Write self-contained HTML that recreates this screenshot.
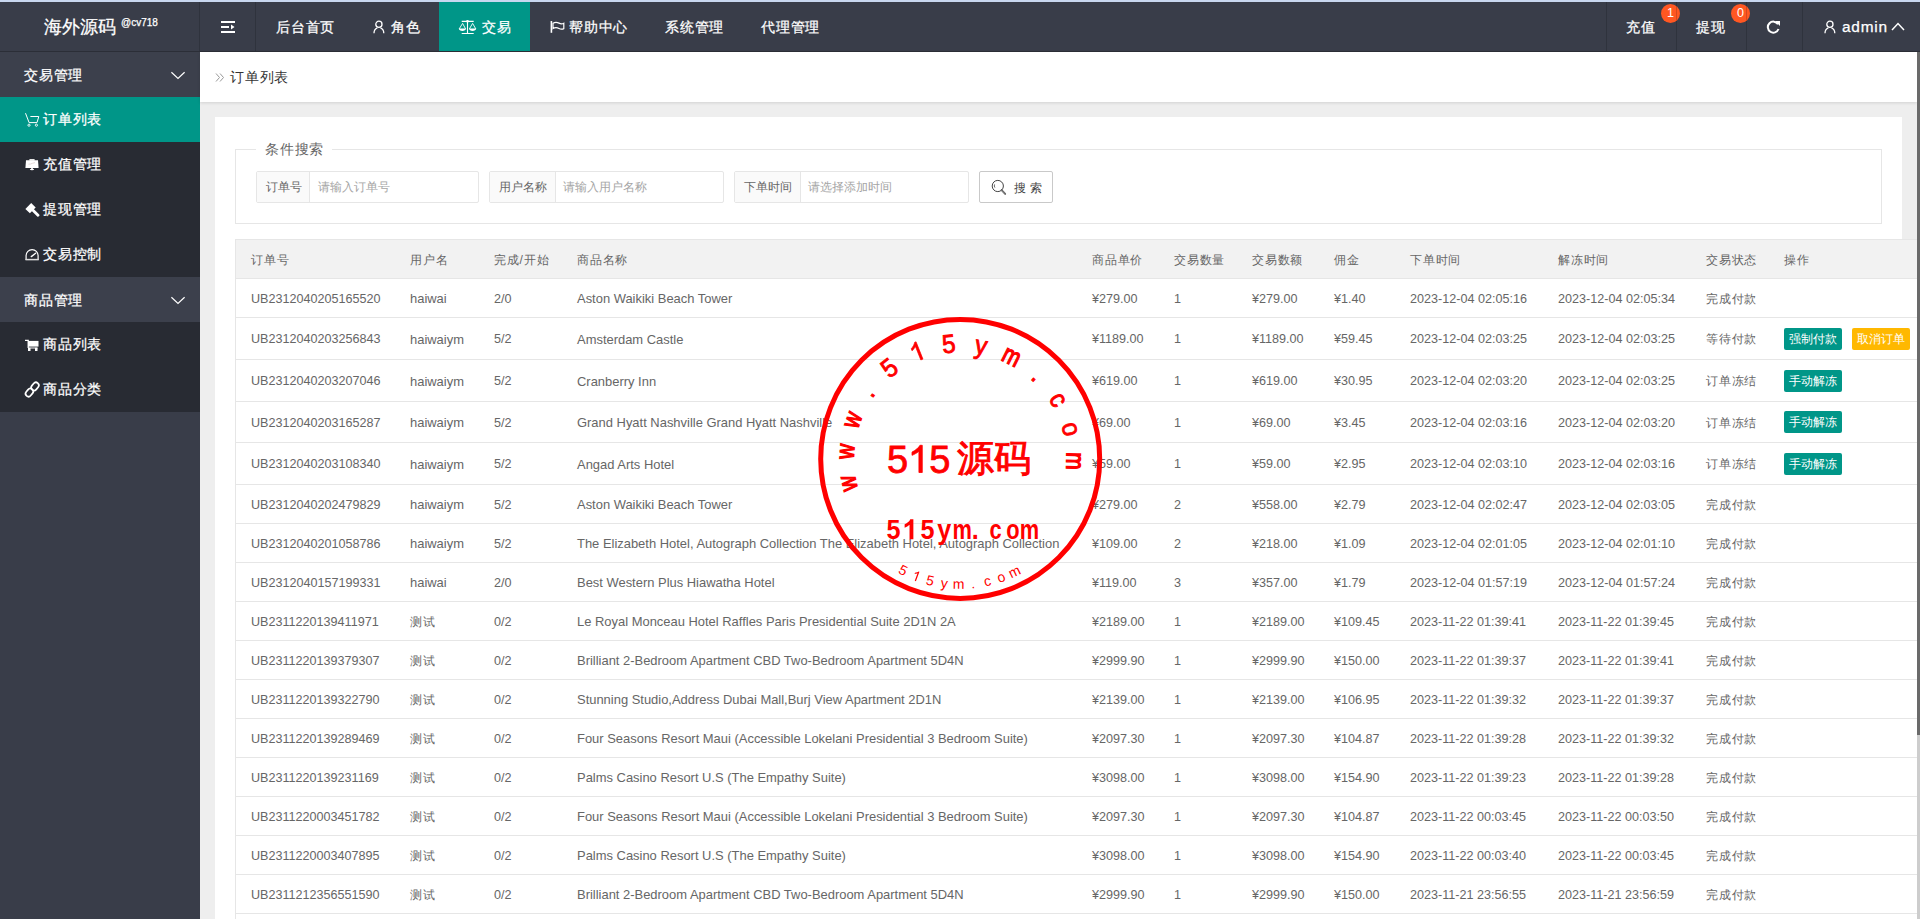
<!DOCTYPE html>
<html><head><meta charset="utf-8">
<style>
*{margin:0;padding:0;box-sizing:border-box}
html,body{width:1920px;height:919px;overflow:hidden;background:#eeeeee;font-family:"Liberation Sans",sans-serif;}
.abs{position:absolute}
#topline{position:absolute;left:0;top:0;width:1920px;height:2px;background:#c8d7ef}
#header{position:absolute;left:0;top:2px;width:1920px;height:50px;background:#393d49;border-bottom:1px solid #2b2e37}
.hsep{position:absolute;top:2px;width:1px;height:49px;background:rgba(0,0,0,0.16)}
.hnav{position:absolute;top:3px;height:49px;line-height:49px;color:#fff;font-size:14px;letter-spacing:0.8px;white-space:nowrap}
.logo{position:absolute;left:44px;top:-2px;height:49px;line-height:49px;color:#fff;font-size:18px}
.logo sup{font-size:10px;position:relative;top:0px;margin-left:5px}
#side{position:absolute;left:0;top:52px;width:200px;height:867px;background:#393d49}
.sp{position:absolute;left:0;width:200px;height:45px;line-height:47px;color:#fff;font-size:14px;letter-spacing:0.8px;padding-left:24px;background:#3c404c}
.sc{position:absolute;left:0;width:200px;height:45px;line-height:45px;color:#fff;font-size:14px;letter-spacing:0.8px;padding-left:43px;background:#282b33}
.sc.on{background:#009688}
.sico{position:absolute;left:25px;top:15px;width:15px;height:15px}
.chev{position:absolute;left:171px;top:19px}
#crumb{position:absolute;left:200px;top:52px;width:1717px;height:50px;background:#fff;box-shadow:0 1px 3px rgba(0,0,0,.12)}
#crumb .t{position:absolute;left:30px;top:0;line-height:50px;font-size:14px;letter-spacing:0.8px;color:#333}
#card{position:absolute;left:215px;top:117px;width:1687px;height:802px;background:#fff}
#fs{position:absolute;left:235px;top:149px;width:1647px;height:75px;border:1px solid #e6e6e6}
#legend{position:absolute;left:256px;top:140px;width:76px;height:20px;background:#fff;font-size:14px;letter-spacing:0.8px;color:#666;line-height:18px;padding-left:9px}
.ig{position:absolute;top:171px;height:32px;border:1px solid #e6e6e6;border-radius:2px;background:#fff}
.ig .lb{position:absolute;left:0;top:0;height:30px;line-height:31px;background:#fafafa;border-right:1px solid #e6e6e6;font-size:12px;color:#666;padding-left:9px}
.ig .ph{position:absolute;top:0;height:30px;line-height:31px;font-size:12px;color:#a5a5a5}
#sbtn{position:absolute;left:979px;top:171px;width:74px;height:32px;border:1px solid #c9c9c9;border-radius:2px;background:#fff;font-size:13px;color:#333;line-height:30px}
.thead{position:absolute;left:235px;width:1682px;background:#f2f2f2;border-top:1px solid #e6e6e6;border-left:1px solid #e6e6e6}
.th,.td{position:absolute;font-size:12.6px;color:#666;white-space:nowrap}
.td{padding-top:1px}
.th{padding-top:2px;font-size:12px;letter-spacing:0.8px}
.tline{position:absolute;left:236px;width:1681px;height:1px;background:#e6e6e6}
#tleft{position:absolute;left:235px;top:239px;width:1px;height:680px;background:#e6e6e6}
#tbg{position:absolute;left:236px;top:279px;width:1681px;height:640px;background:#fff}
.btn{position:absolute;height:22px;line-height:22px;width:58px;text-align:center;background:#009688;color:#fff;font-size:12px;border-radius:2px;white-space:nowrap}
.btn.warm{background:#ffb800}
.hnav,.sp,.sc,.logo{-webkit-text-stroke:0.25px #fff}
#scroll{position:absolute;left:1917px;top:52px;width:3px;height:867px;background:linear-gradient(#6a6a6a 0,#6a6a6a 683px,#cdcdcd 683px)}
.badge{position:absolute;top:3.5px;width:19px;height:19px;border-radius:50%;background:#ff5722;color:#fff;font-size:12.5px;line-height:19px;text-align:center}
</style></head><body>
<div id="topline"></div>
<div id="header"></div>
<div class="hsep" style="left:199px"></div>
<div class="hsep" style="left:255px"></div>
<div class="logo">海外源码<sup>@cv718</sup></div>
<svg class="abs" style="left:221px;top:21px" width="15" height="12" viewBox="0 0 15 12"><rect x="0" y="0" width="14" height="2" fill="#fff"/><rect x="0" y="5" width="8" height="2" fill="#fff"/><path d="M10 3.5 L13.5 6 L10 8.5Z" fill="#fff"/><rect x="0" y="10" width="14" height="2" fill="#fff"/></svg>
<div class="hnav" style="left:276px">后台首页</div>
<svg class="abs" style="left:372px;top:20px" width="14" height="14" viewBox="0 0 14 14"><circle cx="6.9" cy="4.3" r="3.1" fill="none" stroke="#fff" stroke-width="1.3"/><path d="M2 13.2 C2 10.6 3.4 8.7 5.3 7.9 M11.8 13.2 C11.8 10.6 10.4 8.7 8.5 7.9" fill="none" stroke="#fff" stroke-width="1.3"/></svg>
<div class="hnav" style="left:391px">角色</div>
<div class="abs" style="left:439px;top:2px;width:91px;height:49px;background:#009688"></div>
<svg class="abs" style="left:458px;top:19px" width="19" height="16" viewBox="0 0 19 16"><path d="M3.7 2.4H15.7M9.5 2.4V14.5M3.7 14.5H15.7" stroke="#fff" stroke-width="1.1" fill="none"/><circle cx="9.5" cy="2.3" r="1.3" fill="#fff"/><path d="M1.2 9.9 L4.6 4.4 L7.6 9.9 M11.4 9.9 L14.6 4.4 L17.8 9.9" stroke="#fff" stroke-width="0.9" fill="none"/><path d="M0.8 9.6 H8 C8 12.8 0.8 12.8 0.8 9.6Z M11 9.6 H18.2 C18.2 12.8 11 12.8 11 9.6Z" fill="#fff"/></svg>
<div class="hnav" style="left:482px">交易</div>
<svg class="abs" style="left:549px;top:19px" width="17" height="16" viewBox="0 0 17 16"><path d="M2.4 2V13.8" stroke="#fff" stroke-width="1.6"/><path d="M4 4.3 C6 2.9 8 3 10 4.1 C11.8 5.1 13.3 5 14.8 4.2 V9.6 C13.3 10.4 11.8 10.5 10 9.5 C8 8.4 6 8.3 4 9.6Z" stroke="#fff" stroke-width="1.2" fill="none"/></svg>
<div class="hnav" style="left:569px">帮助中心</div>
<div class="hnav" style="left:665px">系统管理</div>
<div class="hnav" style="left:761px">代理管理</div>
<div class="hnav" style="left:1626px">充值</div>
<div class="badge" style="left:1661px">1</div>
<div class="hnav" style="left:1696px">提现</div>
<div class="badge" style="left:1731px">0</div>
<div class="hsep" style="left:1606px"></div>
<div class="hsep" style="left:1676px"></div>
<div class="hsep" style="left:1746px"></div>
<div class="hsep" style="left:1802px"></div>
<svg class="abs" style="left:1766px;top:20px" width="15" height="14" viewBox="0 0 15 14"><path d="M12 4.2 A5.5 5.5 0 1 0 12.5 9" stroke="#fff" stroke-width="2" fill="none"/><path d="M9 1 L14 1 L14 6Z" fill="#fff"/></svg>
<svg class="abs" style="left:1823px;top:20px" width="14" height="14" viewBox="0 0 14 14"><circle cx="6.9" cy="4.3" r="3.1" fill="none" stroke="#fff" stroke-width="1.3"/><path d="M2 13.2 C2 10.6 3.4 8.7 5.3 7.9 M11.8 13.2 C11.8 10.6 10.4 8.7 8.5 7.9" fill="none" stroke="#fff" stroke-width="1.3"/></svg>
<div class="hnav" style="left:1842px;top:2px;font-size:15.4px">admin</div>
<svg class="abs" style="left:1891px;top:22px" width="14" height="9" viewBox="0 0 14 9"><path d="M1 8 L7 1.5 L13 8" stroke="#fff" stroke-width="1.5" fill="none"/></svg>

<div id="side">
  <div class="sp" style="top:0">交易管理<svg class="chev" width="15" height="9" viewBox="0 0 15 9"><path d="M0.4 1.3 L7 7.4 L13.6 1.3" stroke="#fff" stroke-width="1.2" fill="none"/></svg></div>
  <div class="sc on" style="top:45px"><svg class="sico" viewBox="0 0 15 15"><path d="M0.5 1.2 L4.1 10.6 H12 L13.8 4.5 H5.4" stroke="#fff" stroke-width="1" fill="none"/><circle cx="4" cy="13.2" r="1.1" stroke="#fff" stroke-width="0.9" fill="none"/><circle cx="11.4" cy="13.2" r="1.1" stroke="#fff" stroke-width="0.9" fill="none"/></svg>订单列表</div>
  <div class="sc" style="top:90px"><svg class="sico" viewBox="0 0 15 15"><rect x="4.4" y="2" width="5.2" height="1.8" fill="#e6e6e6"/><path d="M1 3.3 H13 L13.6 10.9 H0.4Z" fill="#fff"/><rect x="6.2" y="10.8" width="1.6" height="1.2" fill="#fff"/><ellipse cx="7" cy="12.5" rx="2.2" ry="0.8" fill="#fff"/><path d="M3.5 7.2 L5.5 7 L7.5 6.3 L10 5.6" stroke="#d9c9c9" stroke-width="0.7" fill="none"/></svg>充值管理</div>
  <div class="sc" style="top:135px"><svg class="sico" viewBox="0 0 15 15"><path d="M6.2 0.9 L10.7 5.4 L4.9 11.2 L0.4 6.9Z" fill="#fff"/><path d="M8 8.2 L13 13.3" stroke="#fff" stroke-width="2.8" stroke-linecap="round"/></svg>提现管理</div>
  <div class="sc" style="top:180px"><svg class="sico" viewBox="0 0 15 15"><path d="M1.1 13 V8.6 A6 6 0 0 1 13.1 8.6 V13" stroke="#fff" stroke-width="1.2" fill="none"/><path d="M0.5 12.6 H13.7" stroke="#dcdcdc" stroke-width="1.5"/><path d="M6.3 9.6 L10.6 6.2" stroke="#fff" stroke-width="1.4" stroke-linecap="round"/></svg>交易控制</div>
  <div class="sp" style="top:225px">商品管理<svg class="chev" width="15" height="9" viewBox="0 0 15 9"><path d="M0.4 1.3 L7 7.4 L13.6 1.3" stroke="#fff" stroke-width="1.2" fill="none"/></svg></div>
  <div class="sc" style="top:270px"><svg class="sico" viewBox="0 0 15 15"><path d="M0 3.4 H3.2 V11" stroke="#fff" stroke-width="1.3" fill="none"/><rect x="3" y="3.9" width="10.5" height="5.7" fill="#fff"/><rect x="3.2" y="10.5" width="9.3" height="1" fill="#fff"/><rect x="3" y="10.8" width="2.5" height="3.2" fill="#fff"/><rect x="10" y="10.8" width="2.5" height="3.2" fill="#fff"/></svg>商品列表</div>
  <div class="sc" style="top:315px"><svg class="sico" viewBox="0 0 15 15" style="overflow:visible"><g stroke="#fff" stroke-width="1.7" fill="none"><rect x="-4.3" y="-2.9" width="8.6" height="5.8" rx="2.9" transform="translate(10 4.4) rotate(-50)"/><rect x="-4.3" y="-2.9" width="8.6" height="5.8" rx="2.9" transform="translate(4.4 10.6) rotate(-50)"/></g></svg>商品分类</div>
</div>

<div id="crumb"><svg class="abs" style="left:15px;top:21px" width="10" height="9" viewBox="0 0 10 9"><path d="M1 0.5 L4.5 4.5 L1 8.5 M5 0.5 L8.5 4.5 L5 8.5" stroke="#999" stroke-width="1" fill="none"/></svg><div class="t">订单列表</div></div>

<div id="card"></div>
<div id="fs"></div>
<div id="legend">条件搜索</div>
<div class="ig" style="left:256px;width:223px"><div class="lb" style="width:53px">订单号</div><div class="ph" style="left:61px">请输入订单号</div></div>
<div class="ig" style="left:489px;width:235px"><div class="lb" style="width:66px">用户名称</div><div class="ph" style="left:73px">请输入用户名称</div></div>
<div class="ig" style="left:734px;width:235px"><div class="lb" style="width:66px">下单时间</div><div class="ph" style="left:73px">请选择添加时间</div></div>
<div id="sbtn"><svg class="abs" style="left:11px;top:7px" width="17" height="17" viewBox="0 0 17 17"><circle cx="6.8" cy="7" r="5.6" stroke="#444" stroke-width="1" fill="none"/><path d="M10.6 11.2 L14.2 14.8" stroke="#444" stroke-width="1.8" stroke-linecap="round"/><path d="M10.6 11.2 L14.2 14.8" stroke="#fff" stroke-width="0.5"/><path d="M3.6 5.4 A3.3 3.3 0 0 0 3.9 8.6" stroke="#444" stroke-width="0.8" fill="none"/></svg><span class="abs" style="left:34px;top:1px;letter-spacing:4px;font-size:12px;color:#444">搜索</span></div>

<div class="thead" style="top:239px;height:40px"></div>
<div id="tbg"></div>
<div id="tleft"></div>
<div class="thead" style="top:239px;height:39px"></div>
<div class="th" style="left:251px;top:239px;height:39px;line-height:39px">订单号</div>
<div class="th" style="left:410px;top:239px;height:39px;line-height:39px">用户名</div>
<div class="th" style="left:494px;top:239px;height:39px;line-height:39px">完成/开始</div>
<div class="th" style="left:577px;top:239px;height:39px;line-height:39px">商品名称</div>
<div class="th" style="left:1092px;top:239px;height:39px;line-height:39px">商品单价</div>
<div class="th" style="left:1174px;top:239px;height:39px;line-height:39px">交易数量</div>
<div class="th" style="left:1252px;top:239px;height:39px;line-height:39px">交易数额</div>
<div class="th" style="left:1334px;top:239px;height:39px;line-height:39px">佣金</div>
<div class="th" style="left:1410px;top:239px;height:39px;line-height:39px">下单时间</div>
<div class="th" style="left:1558px;top:239px;height:39px;line-height:39px">解冻时间</div>
<div class="th" style="left:1706px;top:239px;height:39px;line-height:39px">交易状态</div>
<div class="th" style="left:1784px;top:239px;height:39px;line-height:39px">操作</div>
<div class="tline" style="top:278px"></div>
<div class="tline" style="top:317px"></div>
<div class="td" style="left:251px;top:279px;height:38px;line-height:38px">UB2312040205165520</div>
<div class="td" style="left:410px;top:279px;height:38px;line-height:38px;font-size:12.95px">haiwai</div>
<div class="td" style="left:494px;top:279px;height:38px;line-height:38px">2/0</div>
<div class="td" style="left:577px;top:279px;height:38px;line-height:38px;font-size:12.95px">Aston Waikiki Beach Tower</div>
<div class="td" style="left:1092px;top:279px;height:38px;line-height:38px">¥279.00</div>
<div class="td" style="left:1174px;top:279px;height:38px;line-height:38px">1</div>
<div class="td" style="left:1252px;top:279px;height:38px;line-height:38px">¥279.00</div>
<div class="td" style="left:1334px;top:279px;height:38px;line-height:38px">¥1.40</div>
<div class="td" style="left:1410px;top:279px;height:38px;line-height:38px">2023-12-04 02:05:16</div>
<div class="td" style="left:1558px;top:279px;height:38px;line-height:38px">2023-12-04 02:05:34</div>
<div class="td" style="left:1706px;top:279px;height:38px;line-height:38px;font-size:12px;letter-spacing:0.8px">完成付款</div>
<div class="tline" style="top:359px"></div>
<div class="td" style="left:251px;top:318px;height:41px;line-height:41px">UB2312040203256843</div>
<div class="td" style="left:410px;top:318px;height:41px;line-height:41px;font-size:12.95px">haiwaiym</div>
<div class="td" style="left:494px;top:318px;height:41px;line-height:41px">5/2</div>
<div class="td" style="left:577px;top:318px;height:41px;line-height:41px;font-size:12.95px">Amsterdam Castle</div>
<div class="td" style="left:1092px;top:318px;height:41px;line-height:41px">¥1189.00</div>
<div class="td" style="left:1174px;top:318px;height:41px;line-height:41px">1</div>
<div class="td" style="left:1252px;top:318px;height:41px;line-height:41px">¥1189.00</div>
<div class="td" style="left:1334px;top:318px;height:41px;line-height:41px">¥59.45</div>
<div class="td" style="left:1410px;top:318px;height:41px;line-height:41px">2023-12-04 02:03:25</div>
<div class="td" style="left:1558px;top:318px;height:41px;line-height:41px">2023-12-04 02:03:25</div>
<div class="td" style="left:1706px;top:318px;height:41px;line-height:41px;font-size:12px;letter-spacing:0.8px">等待付款</div>
<div class="btn" style="left:1784px;top:328px">强制付款</div>
<div class="btn warm" style="left:1852px;top:328px">取消订单</div>
<div class="tline" style="top:401px"></div>
<div class="td" style="left:251px;top:360px;height:41px;line-height:41px">UB2312040203207046</div>
<div class="td" style="left:410px;top:360px;height:41px;line-height:41px;font-size:12.95px">haiwaiym</div>
<div class="td" style="left:494px;top:360px;height:41px;line-height:41px">5/2</div>
<div class="td" style="left:577px;top:360px;height:41px;line-height:41px;font-size:12.95px">Cranberry Inn</div>
<div class="td" style="left:1092px;top:360px;height:41px;line-height:41px">¥619.00</div>
<div class="td" style="left:1174px;top:360px;height:41px;line-height:41px">1</div>
<div class="td" style="left:1252px;top:360px;height:41px;line-height:41px">¥619.00</div>
<div class="td" style="left:1334px;top:360px;height:41px;line-height:41px">¥30.95</div>
<div class="td" style="left:1410px;top:360px;height:41px;line-height:41px">2023-12-04 02:03:20</div>
<div class="td" style="left:1558px;top:360px;height:41px;line-height:41px">2023-12-04 02:03:25</div>
<div class="td" style="left:1706px;top:360px;height:41px;line-height:41px;font-size:12px;letter-spacing:0.8px">订单冻结</div>
<div class="btn" style="left:1784px;top:370px">手动解冻</div>
<div class="tline" style="top:442px"></div>
<div class="td" style="left:251px;top:402px;height:40px;line-height:40px">UB2312040203165287</div>
<div class="td" style="left:410px;top:402px;height:40px;line-height:40px;font-size:12.95px">haiwaiym</div>
<div class="td" style="left:494px;top:402px;height:40px;line-height:40px">5/2</div>
<div class="td" style="left:577px;top:402px;height:40px;line-height:40px;font-size:12.95px">Grand Hyatt Nashville Grand Hyatt Nashville</div>
<div class="td" style="left:1092px;top:402px;height:40px;line-height:40px">¥69.00</div>
<div class="td" style="left:1174px;top:402px;height:40px;line-height:40px">1</div>
<div class="td" style="left:1252px;top:402px;height:40px;line-height:40px">¥69.00</div>
<div class="td" style="left:1334px;top:402px;height:40px;line-height:40px">¥3.45</div>
<div class="td" style="left:1410px;top:402px;height:40px;line-height:40px">2023-12-04 02:03:16</div>
<div class="td" style="left:1558px;top:402px;height:40px;line-height:40px">2023-12-04 02:03:20</div>
<div class="td" style="left:1706px;top:402px;height:40px;line-height:40px;font-size:12px;letter-spacing:0.8px">订单冻结</div>
<div class="btn" style="left:1784px;top:411px">手动解冻</div>
<div class="tline" style="top:484px"></div>
<div class="td" style="left:251px;top:443px;height:41px;line-height:41px">UB2312040203108340</div>
<div class="td" style="left:410px;top:443px;height:41px;line-height:41px;font-size:12.95px">haiwaiym</div>
<div class="td" style="left:494px;top:443px;height:41px;line-height:41px">5/2</div>
<div class="td" style="left:577px;top:443px;height:41px;line-height:41px;font-size:12.95px">Angad Arts Hotel</div>
<div class="td" style="left:1092px;top:443px;height:41px;line-height:41px">¥59.00</div>
<div class="td" style="left:1174px;top:443px;height:41px;line-height:41px">1</div>
<div class="td" style="left:1252px;top:443px;height:41px;line-height:41px">¥59.00</div>
<div class="td" style="left:1334px;top:443px;height:41px;line-height:41px">¥2.95</div>
<div class="td" style="left:1410px;top:443px;height:41px;line-height:41px">2023-12-04 02:03:10</div>
<div class="td" style="left:1558px;top:443px;height:41px;line-height:41px">2023-12-04 02:03:16</div>
<div class="td" style="left:1706px;top:443px;height:41px;line-height:41px;font-size:12px;letter-spacing:0.8px">订单冻结</div>
<div class="btn" style="left:1784px;top:453px">手动解冻</div>
<div class="tline" style="top:523px"></div>
<div class="td" style="left:251px;top:485px;height:38px;line-height:38px">UB2312040202479829</div>
<div class="td" style="left:410px;top:485px;height:38px;line-height:38px;font-size:12.95px">haiwaiym</div>
<div class="td" style="left:494px;top:485px;height:38px;line-height:38px">5/2</div>
<div class="td" style="left:577px;top:485px;height:38px;line-height:38px;font-size:12.95px">Aston Waikiki Beach Tower</div>
<div class="td" style="left:1092px;top:485px;height:38px;line-height:38px">¥279.00</div>
<div class="td" style="left:1174px;top:485px;height:38px;line-height:38px">2</div>
<div class="td" style="left:1252px;top:485px;height:38px;line-height:38px">¥558.00</div>
<div class="td" style="left:1334px;top:485px;height:38px;line-height:38px">¥2.79</div>
<div class="td" style="left:1410px;top:485px;height:38px;line-height:38px">2023-12-04 02:02:47</div>
<div class="td" style="left:1558px;top:485px;height:38px;line-height:38px">2023-12-04 02:03:05</div>
<div class="td" style="left:1706px;top:485px;height:38px;line-height:38px;font-size:12px;letter-spacing:0.8px">完成付款</div>
<div class="tline" style="top:562px"></div>
<div class="td" style="left:251px;top:524px;height:38px;line-height:38px">UB2312040201058786</div>
<div class="td" style="left:410px;top:524px;height:38px;line-height:38px;font-size:12.95px">haiwaiym</div>
<div class="td" style="left:494px;top:524px;height:38px;line-height:38px">5/2</div>
<div class="td" style="left:577px;top:524px;height:38px;line-height:38px;font-size:12.95px">The Elizabeth Hotel, Autograph Collection The Elizabeth Hotel, Autograph Collection</div>
<div class="td" style="left:1092px;top:524px;height:38px;line-height:38px">¥109.00</div>
<div class="td" style="left:1174px;top:524px;height:38px;line-height:38px">2</div>
<div class="td" style="left:1252px;top:524px;height:38px;line-height:38px">¥218.00</div>
<div class="td" style="left:1334px;top:524px;height:38px;line-height:38px">¥1.09</div>
<div class="td" style="left:1410px;top:524px;height:38px;line-height:38px">2023-12-04 02:01:05</div>
<div class="td" style="left:1558px;top:524px;height:38px;line-height:38px">2023-12-04 02:01:10</div>
<div class="td" style="left:1706px;top:524px;height:38px;line-height:38px;font-size:12px;letter-spacing:0.8px">完成付款</div>
<div class="tline" style="top:601px"></div>
<div class="td" style="left:251px;top:563px;height:38px;line-height:38px">UB2312040157199331</div>
<div class="td" style="left:410px;top:563px;height:38px;line-height:38px;font-size:12.95px">haiwai</div>
<div class="td" style="left:494px;top:563px;height:38px;line-height:38px">2/0</div>
<div class="td" style="left:577px;top:563px;height:38px;line-height:38px;font-size:12.95px">Best Western Plus Hiawatha Hotel</div>
<div class="td" style="left:1092px;top:563px;height:38px;line-height:38px">¥119.00</div>
<div class="td" style="left:1174px;top:563px;height:38px;line-height:38px">3</div>
<div class="td" style="left:1252px;top:563px;height:38px;line-height:38px">¥357.00</div>
<div class="td" style="left:1334px;top:563px;height:38px;line-height:38px">¥1.79</div>
<div class="td" style="left:1410px;top:563px;height:38px;line-height:38px">2023-12-04 01:57:19</div>
<div class="td" style="left:1558px;top:563px;height:38px;line-height:38px">2023-12-04 01:57:24</div>
<div class="td" style="left:1706px;top:563px;height:38px;line-height:38px;font-size:12px;letter-spacing:0.8px">完成付款</div>
<div class="tline" style="top:640px"></div>
<div class="td" style="left:251px;top:602px;height:38px;line-height:38px">UB2311220139411971</div>
<div class="td" style="left:410px;top:602px;height:38px;line-height:38px;font-size:12px;letter-spacing:0.8px">测试</div>
<div class="td" style="left:494px;top:602px;height:38px;line-height:38px">0/2</div>
<div class="td" style="left:577px;top:602px;height:38px;line-height:38px;font-size:12.95px">Le Royal Monceau Hotel Raffles Paris Presidential Suite 2D1N 2A</div>
<div class="td" style="left:1092px;top:602px;height:38px;line-height:38px">¥2189.00</div>
<div class="td" style="left:1174px;top:602px;height:38px;line-height:38px">1</div>
<div class="td" style="left:1252px;top:602px;height:38px;line-height:38px">¥2189.00</div>
<div class="td" style="left:1334px;top:602px;height:38px;line-height:38px">¥109.45</div>
<div class="td" style="left:1410px;top:602px;height:38px;line-height:38px">2023-11-22 01:39:41</div>
<div class="td" style="left:1558px;top:602px;height:38px;line-height:38px">2023-11-22 01:39:45</div>
<div class="td" style="left:1706px;top:602px;height:38px;line-height:38px;font-size:12px;letter-spacing:0.8px">完成付款</div>
<div class="tline" style="top:679px"></div>
<div class="td" style="left:251px;top:641px;height:38px;line-height:38px">UB2311220139379307</div>
<div class="td" style="left:410px;top:641px;height:38px;line-height:38px;font-size:12px;letter-spacing:0.8px">测试</div>
<div class="td" style="left:494px;top:641px;height:38px;line-height:38px">0/2</div>
<div class="td" style="left:577px;top:641px;height:38px;line-height:38px;font-size:12.95px">Brilliant 2-Bedroom Apartment CBD Two-Bedroom Apartment 5D4N</div>
<div class="td" style="left:1092px;top:641px;height:38px;line-height:38px">¥2999.90</div>
<div class="td" style="left:1174px;top:641px;height:38px;line-height:38px">1</div>
<div class="td" style="left:1252px;top:641px;height:38px;line-height:38px">¥2999.90</div>
<div class="td" style="left:1334px;top:641px;height:38px;line-height:38px">¥150.00</div>
<div class="td" style="left:1410px;top:641px;height:38px;line-height:38px">2023-11-22 01:39:37</div>
<div class="td" style="left:1558px;top:641px;height:38px;line-height:38px">2023-11-22 01:39:41</div>
<div class="td" style="left:1706px;top:641px;height:38px;line-height:38px;font-size:12px;letter-spacing:0.8px">完成付款</div>
<div class="tline" style="top:718px"></div>
<div class="td" style="left:251px;top:680px;height:38px;line-height:38px">UB2311220139322790</div>
<div class="td" style="left:410px;top:680px;height:38px;line-height:38px;font-size:12px;letter-spacing:0.8px">测试</div>
<div class="td" style="left:494px;top:680px;height:38px;line-height:38px">0/2</div>
<div class="td" style="left:577px;top:680px;height:38px;line-height:38px;font-size:12.95px">Stunning Studio,Address Dubai Mall,Burj View Apartment 2D1N</div>
<div class="td" style="left:1092px;top:680px;height:38px;line-height:38px">¥2139.00</div>
<div class="td" style="left:1174px;top:680px;height:38px;line-height:38px">1</div>
<div class="td" style="left:1252px;top:680px;height:38px;line-height:38px">¥2139.00</div>
<div class="td" style="left:1334px;top:680px;height:38px;line-height:38px">¥106.95</div>
<div class="td" style="left:1410px;top:680px;height:38px;line-height:38px">2023-11-22 01:39:32</div>
<div class="td" style="left:1558px;top:680px;height:38px;line-height:38px">2023-11-22 01:39:37</div>
<div class="td" style="left:1706px;top:680px;height:38px;line-height:38px;font-size:12px;letter-spacing:0.8px">完成付款</div>
<div class="tline" style="top:757px"></div>
<div class="td" style="left:251px;top:719px;height:38px;line-height:38px">UB2311220139289469</div>
<div class="td" style="left:410px;top:719px;height:38px;line-height:38px;font-size:12px;letter-spacing:0.8px">测试</div>
<div class="td" style="left:494px;top:719px;height:38px;line-height:38px">0/2</div>
<div class="td" style="left:577px;top:719px;height:38px;line-height:38px;font-size:12.95px">Four Seasons Resort Maui (Accessible Lokelani Presidential 3 Bedroom Suite)</div>
<div class="td" style="left:1092px;top:719px;height:38px;line-height:38px">¥2097.30</div>
<div class="td" style="left:1174px;top:719px;height:38px;line-height:38px">1</div>
<div class="td" style="left:1252px;top:719px;height:38px;line-height:38px">¥2097.30</div>
<div class="td" style="left:1334px;top:719px;height:38px;line-height:38px">¥104.87</div>
<div class="td" style="left:1410px;top:719px;height:38px;line-height:38px">2023-11-22 01:39:28</div>
<div class="td" style="left:1558px;top:719px;height:38px;line-height:38px">2023-11-22 01:39:32</div>
<div class="td" style="left:1706px;top:719px;height:38px;line-height:38px;font-size:12px;letter-spacing:0.8px">完成付款</div>
<div class="tline" style="top:796px"></div>
<div class="td" style="left:251px;top:758px;height:38px;line-height:38px">UB2311220139231169</div>
<div class="td" style="left:410px;top:758px;height:38px;line-height:38px;font-size:12px;letter-spacing:0.8px">测试</div>
<div class="td" style="left:494px;top:758px;height:38px;line-height:38px">0/2</div>
<div class="td" style="left:577px;top:758px;height:38px;line-height:38px;font-size:12.95px">Palms Casino Resort U.S (The Empathy Suite)</div>
<div class="td" style="left:1092px;top:758px;height:38px;line-height:38px">¥3098.00</div>
<div class="td" style="left:1174px;top:758px;height:38px;line-height:38px">1</div>
<div class="td" style="left:1252px;top:758px;height:38px;line-height:38px">¥3098.00</div>
<div class="td" style="left:1334px;top:758px;height:38px;line-height:38px">¥154.90</div>
<div class="td" style="left:1410px;top:758px;height:38px;line-height:38px">2023-11-22 01:39:23</div>
<div class="td" style="left:1558px;top:758px;height:38px;line-height:38px">2023-11-22 01:39:28</div>
<div class="td" style="left:1706px;top:758px;height:38px;line-height:38px;font-size:12px;letter-spacing:0.8px">完成付款</div>
<div class="tline" style="top:835px"></div>
<div class="td" style="left:251px;top:797px;height:38px;line-height:38px">UB2311220003451782</div>
<div class="td" style="left:410px;top:797px;height:38px;line-height:38px;font-size:12px;letter-spacing:0.8px">测试</div>
<div class="td" style="left:494px;top:797px;height:38px;line-height:38px">0/2</div>
<div class="td" style="left:577px;top:797px;height:38px;line-height:38px;font-size:12.95px">Four Seasons Resort Maui (Accessible Lokelani Presidential 3 Bedroom Suite)</div>
<div class="td" style="left:1092px;top:797px;height:38px;line-height:38px">¥2097.30</div>
<div class="td" style="left:1174px;top:797px;height:38px;line-height:38px">1</div>
<div class="td" style="left:1252px;top:797px;height:38px;line-height:38px">¥2097.30</div>
<div class="td" style="left:1334px;top:797px;height:38px;line-height:38px">¥104.87</div>
<div class="td" style="left:1410px;top:797px;height:38px;line-height:38px">2023-11-22 00:03:45</div>
<div class="td" style="left:1558px;top:797px;height:38px;line-height:38px">2023-11-22 00:03:50</div>
<div class="td" style="left:1706px;top:797px;height:38px;line-height:38px;font-size:12px;letter-spacing:0.8px">完成付款</div>
<div class="tline" style="top:874px"></div>
<div class="td" style="left:251px;top:836px;height:38px;line-height:38px">UB2311220003407895</div>
<div class="td" style="left:410px;top:836px;height:38px;line-height:38px;font-size:12px;letter-spacing:0.8px">测试</div>
<div class="td" style="left:494px;top:836px;height:38px;line-height:38px">0/2</div>
<div class="td" style="left:577px;top:836px;height:38px;line-height:38px;font-size:12.95px">Palms Casino Resort U.S (The Empathy Suite)</div>
<div class="td" style="left:1092px;top:836px;height:38px;line-height:38px">¥3098.00</div>
<div class="td" style="left:1174px;top:836px;height:38px;line-height:38px">1</div>
<div class="td" style="left:1252px;top:836px;height:38px;line-height:38px">¥3098.00</div>
<div class="td" style="left:1334px;top:836px;height:38px;line-height:38px">¥154.90</div>
<div class="td" style="left:1410px;top:836px;height:38px;line-height:38px">2023-11-22 00:03:40</div>
<div class="td" style="left:1558px;top:836px;height:38px;line-height:38px">2023-11-22 00:03:45</div>
<div class="td" style="left:1706px;top:836px;height:38px;line-height:38px;font-size:12px;letter-spacing:0.8px">完成付款</div>
<div class="tline" style="top:913px"></div>
<div class="td" style="left:251px;top:875px;height:38px;line-height:38px">UB2311212356551590</div>
<div class="td" style="left:410px;top:875px;height:38px;line-height:38px;font-size:12px;letter-spacing:0.8px">测试</div>
<div class="td" style="left:494px;top:875px;height:38px;line-height:38px">0/2</div>
<div class="td" style="left:577px;top:875px;height:38px;line-height:38px;font-size:12.95px">Brilliant 2-Bedroom Apartment CBD Two-Bedroom Apartment 5D4N</div>
<div class="td" style="left:1092px;top:875px;height:38px;line-height:38px">¥2999.90</div>
<div class="td" style="left:1174px;top:875px;height:38px;line-height:38px">1</div>
<div class="td" style="left:1252px;top:875px;height:38px;line-height:38px">¥2999.90</div>
<div class="td" style="left:1334px;top:875px;height:38px;line-height:38px">¥150.00</div>
<div class="td" style="left:1410px;top:875px;height:38px;line-height:38px">2023-11-21 23:56:55</div>
<div class="td" style="left:1558px;top:875px;height:38px;line-height:38px">2023-11-21 23:56:59</div>
<div class="td" style="left:1706px;top:875px;height:38px;line-height:38px;font-size:12px;letter-spacing:0.8px">完成付款</div>

<svg class="abs" style="left:0;top:0" width="1920" height="919" viewBox="0 0 1920 919">
<circle cx="960.2" cy="458.9" r="139.5" stroke="#f00" stroke-width="5" fill="none"/>
<text x="0" y="0" transform="rotate(-102.40 960.20 458.90) translate(960.20 352.40) scale(0.80 1)" text-anchor="middle" font-family="Liberation Sans" font-size="26" fill="#f00" stroke="#f00" stroke-width="1.4">w</text>
<text x="0" y="0" transform="rotate(-86.28 960.20 458.90) translate(960.20 352.40) scale(0.80 1)" text-anchor="middle" font-family="Liberation Sans" font-size="26" fill="#f00" stroke="#f00" stroke-width="1.4">w</text>
<text x="0" y="0" transform="rotate(-70.15 960.20 458.90) translate(960.20 352.40) scale(0.80 1)" text-anchor="middle" font-family="Liberation Sans" font-size="26" fill="#f00" stroke="#f00" stroke-width="1.4">w</text>
<text x="0" y="0" transform="rotate(-54.03 960.20 458.90) translate(960.20 352.40) scale(0.92 1)" text-anchor="middle" font-family="Liberation Sans" font-size="26" fill="#f00" stroke="#f00" stroke-width="0.9">.</text>
<text x="0" y="0" transform="rotate(-37.90 960.20 458.90) translate(960.20 352.40) scale(0.92 1)" text-anchor="middle" font-family="Liberation Sans" font-size="26" fill="#f00" stroke="#f00" stroke-width="0.9">5</text>
<path d="M 0.372 0 L 0.284 0 L 0.284 0.560 C 0.263 0.540 0.234 0.520 0.198 0.499 C 0.163 0.478 0.130 0.462 0.102 0.452 L 0.102 0.537 C 0.152 0.560 0.195 0.589 0.232 0.622 C 0.269 0.655 0.296 0.687 0.311 0.716 L 0.372 0.716 Z" transform="rotate(-21.78 960.20 458.90) translate(952.97 352.40) scale(26.00 -26.00)" fill="#f00" stroke="#f00" stroke-width="0.70" vector-effect="non-scaling-stroke"/>
<text x="0" y="0" transform="rotate(-5.65 960.20 458.90) translate(960.20 352.40) scale(0.92 1)" text-anchor="middle" font-family="Liberation Sans" font-size="26" fill="#f00" stroke="#f00" stroke-width="0.9">5</text>
<text x="0" y="0" transform="rotate(10.47 960.20 458.90) translate(960.20 352.40) scale(0.92 1)" text-anchor="middle" font-family="Liberation Sans" font-size="26" fill="#f00" stroke="#f00" stroke-width="0.9">y</text>
<text x="0" y="0" transform="rotate(26.60 960.20 458.90) translate(960.20 352.40) scale(0.80 1)" text-anchor="middle" font-family="Liberation Sans" font-size="26" fill="#f00" stroke="#f00" stroke-width="1.4">m</text>
<text x="0" y="0" transform="rotate(42.72 960.20 458.90) translate(960.20 352.40) scale(0.92 1)" text-anchor="middle" font-family="Liberation Sans" font-size="26" fill="#f00" stroke="#f00" stroke-width="0.9">.</text>
<text x="0" y="0" transform="rotate(58.85 960.20 458.90) translate(960.20 352.40) scale(0.92 1)" text-anchor="middle" font-family="Liberation Sans" font-size="26" fill="#f00" stroke="#f00" stroke-width="0.9">c</text>
<text x="0" y="0" transform="rotate(74.97 960.20 458.90) translate(960.20 352.40) scale(0.92 1)" text-anchor="middle" font-family="Liberation Sans" font-size="26" fill="#f00" stroke="#f00" stroke-width="0.9">o</text>
<text x="0" y="0" transform="rotate(91.10 960.20 458.90) translate(960.20 352.40) scale(0.80 1)" text-anchor="middle" font-family="Liberation Sans" font-size="26" fill="#f00" stroke="#f00" stroke-width="1.4">m</text>
<text x="960.20" y="588.90" transform="rotate(27.10 960.20 458.90)" text-anchor="middle" font-family="Liberation Sans" font-size="14" fill="#f00">5</text>
<path d="M 0.372 0 L 0.284 0 L 0.284 0.560 C 0.263 0.540 0.234 0.520 0.198 0.499 C 0.163 0.478 0.130 0.462 0.102 0.452 L 0.102 0.537 C 0.152 0.560 0.195 0.589 0.232 0.622 C 0.269 0.655 0.296 0.687 0.311 0.716 L 0.372 0.716 Z" transform="rotate(20.50 960.20 458.90) translate(956.31 588.90) scale(14.00 -14.00)" fill="#f00"/>
<text x="960.20" y="588.90" transform="rotate(13.90 960.20 458.90)" text-anchor="middle" font-family="Liberation Sans" font-size="14" fill="#f00">5</text>
<text x="960.20" y="588.90" transform="rotate(7.30 960.20 458.90)" text-anchor="middle" font-family="Liberation Sans" font-size="14" fill="#f00">y</text>
<text x="960.20" y="588.90" transform="rotate(0.70 960.20 458.90)" text-anchor="middle" font-family="Liberation Sans" font-size="14" fill="#f00">m</text>
<text x="960.20" y="588.90" transform="rotate(-5.90 960.20 458.90)" text-anchor="middle" font-family="Liberation Sans" font-size="14" fill="#f00">.</text>
<text x="960.20" y="588.90" transform="rotate(-12.50 960.20 458.90)" text-anchor="middle" font-family="Liberation Sans" font-size="14" fill="#f00">c</text>
<text x="960.20" y="588.90" transform="rotate(-19.10 960.20 458.90)" text-anchor="middle" font-family="Liberation Sans" font-size="14" fill="#f00">o</text>
<text x="960.20" y="588.90" transform="rotate(-25.70 960.20 458.90)" text-anchor="middle" font-family="Liberation Sans" font-size="14" fill="#f00">m</text>
<text x="887" y="472.5" font-family="Liberation Sans" font-size="38" fill="#f00" stroke="#f00" stroke-width="0.8">5</text>
<path d="M 0.372 0 L 0.284 0 L 0.284 0.560 C 0.263 0.540 0.234 0.520 0.198 0.499 C 0.163 0.478 0.130 0.462 0.102 0.452 L 0.102 0.537 C 0.152 0.560 0.195 0.589 0.232 0.622 C 0.269 0.655 0.296 0.687 0.311 0.716 L 0.372 0.716 Z" transform=" translate(908.13 472.50) scale(38.00 -38.00)" fill="#f00" stroke="#f00" stroke-width="0.80" vector-effect="non-scaling-stroke"/>
<text x="929.26" y="472.5" font-family="Liberation Sans" font-size="38" fill="#f00" stroke="#f00" stroke-width="0.8">5</text>
<text x="957" y="471" font-family="Liberation Serif" font-size="37" fill="#f00" stroke="#f00" stroke-width="1">源码</text>
<text x="0" y="0" transform="translate(893.50 539.2) scale(0.90 1)" text-anchor="middle" font-family="Liberation Sans" font-weight="bold" font-size="28" fill="#f00">5</text>
<path d="M 0.402 0 L 0.265 0 L 0.265 0.516 C 0.215 0.470 0.157 0.436 0.090 0.413 L 0.090 0.537 C 0.125 0.549 0.164 0.571 0.206 0.604 C 0.248 0.637 0.277 0.675 0.292 0.716 L 0.402 0.716 Z" transform="translate(902.11 539.2) scale(28 -28)" fill="#f00"/>
<text x="0" y="0" transform="translate(927.50 539.2) scale(0.90 1)" text-anchor="middle" font-family="Liberation Sans" font-weight="bold" font-size="28" fill="#f00">5</text>
<text x="0" y="0" transform="translate(944.25 539.2) scale(0.90 1)" text-anchor="middle" font-family="Liberation Sans" font-weight="bold" font-size="28" fill="#f00">y</text>
<text x="0" y="0" transform="translate(962.30 539.2) scale(0.78 1)" text-anchor="middle" font-family="Liberation Sans" font-weight="bold" font-size="28" fill="#f00">m</text>
<text x="0" y="0" transform="translate(975.35 539.2) scale(0.90 1)" text-anchor="middle" font-family="Liberation Sans" font-weight="bold" font-size="28" fill="#f00">.</text>
<text x="0" y="0" transform="translate(995.60 539.2) scale(0.78 1)" text-anchor="middle" font-family="Liberation Sans" font-weight="bold" font-size="28" fill="#f00">c</text>
<text x="0" y="0" transform="translate(1012.80 539.2) scale(0.78 1)" text-anchor="middle" font-family="Liberation Sans" font-weight="bold" font-size="28" fill="#f00">o</text>
<text x="0" y="0" transform="translate(1029.50 539.2) scale(0.78 1)" text-anchor="middle" font-family="Liberation Sans" font-weight="bold" font-size="28" fill="#f00">m</text>
</svg>
<div id="scroll"></div>
</body></html>
